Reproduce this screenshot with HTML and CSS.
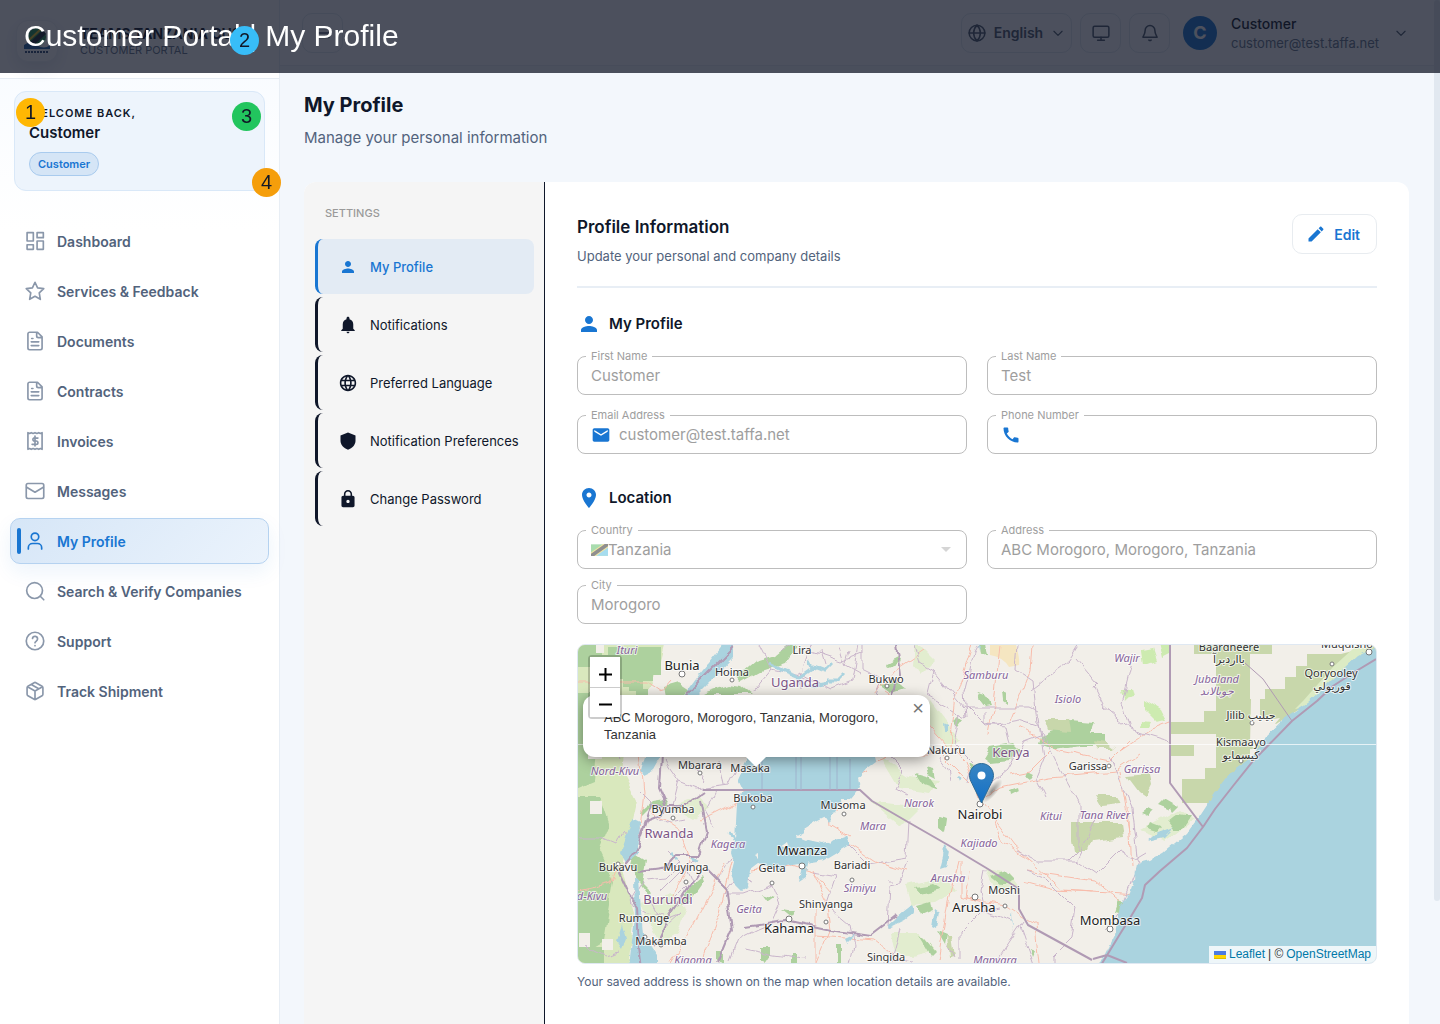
FILE: index.html
```html
<!DOCTYPE html>
<html lang="en">
<head>
<meta charset="utf-8">
<meta name="viewport" content="width=device-width, initial-scale=1">
<title>Customer Portal | My Profile</title>
<link rel="stylesheet" href="styles.css">
</head>
<body>
<svg class="sprite" aria-hidden="true">
  <symbol id="person" viewBox="0 0 24 24"><path d="M12 12c2.21 0 4-1.79 4-4s-1.79-4-4-4-4 1.79-4 4 1.79 4 4 4zm0 2c-2.67 0-8 1.34-8 4v2h16v-2c0-2.66-5.33-4-8-4z"/></symbol>
  <symbol id="doc" viewBox="0 0 24 24"><path d="M15 1.500H5.500a2 2 0 0 0-2 2v17a2 2 0 0 0 2 2h13a2 2 0 0 0 2-2V7zM14 2v4a2 2 0 0 0 2 2h4M9.500 9H8M16.500 13H7.500M16.500 17.500H7.500"/></symbol>
  <symbol id="chevron" viewBox="0 0 24 24"><path d="m5 9 7 7 7-7"/></symbol>
</svg>

<div class="shell">
  <aside class="sidebar">
    <div class="brand">
      <div class="logo">
        <svg viewBox="0 0 28 28" width="28" height="28"><circle cx="14" cy="10" r="9" fill="#1f8a4c"/><path d="M6 16 20 3l3 4L10 19z" fill="#1b2433"/><path d="M5 14 18 2" stroke="#e8c020" stroke-width="2"/><path d="M1 18q6-5 13 0t13 0v4H1z" fill="#1f5fa8"/><path d="M2 25h24" stroke="#2c4a74" stroke-width="2" stroke-dasharray="2 1"/></svg>
      </div>
      <div class="brand-text"><strong>TEAMS TANZANIA CUS</strong><span>CUSTOMER PORTAL</span></div>
    </div>
    <section class="welcome">
      <p class="welcome-hi">WELCOME BACK,</p>
      <p class="welcome-name">Customer</p>
      <span class="chip">Customer</span>
    </section>
    <nav class="nav" aria-label="Main">
      <a href="#"><svg class="line" viewBox="0 0 24 24"><path d="M2.500 2h7.500v10H2.500zM14.500 2h7.500v6h-7.500zM14.500 12h7.500v10h-7.500zM2.500 16.500h7.500V22H2.500z"/></svg>Dashboard</a>
      <a href="#"><svg class="line" viewBox="0 0 24 24"><path d="m12 1.500 3.100 6.700 7.400 1-5.400 5.100 1.300 7.700-6.400-3.700-6.400 3.700 1.300-7.700-5.400-5.100 7.400-1z"/></svg>Services &amp; Feedback</a>
      <a href="#"><svg class="line"><use href="#doc"/></svg>Documents</a>
      <a href="#"><svg class="line"><use href="#doc"/></svg>Contracts</a>
      <a href="#"><svg class="line" viewBox="0 0 24 24"><path d="M3.500 2v20l2-1 2 1 2.200-1 2.300 1 2.300-1 2.200 1 2-1 2 1V2l-2 1-2-1-2.200 1L12 2 9.700 3 7.500 2l-2 1zM15.500 8.500h-5a2 2 0 0 0 0 3.500h3a2 2 0 0 1 0 4h-5M12 6v12"/></svg>Invoices</a>
      <a href="#"><svg class="line" viewBox="0 0 24 24"><rect x="1.500" y="3" width="21" height="18" rx="2"/><path d="m2 7.500 10 6 10-6"/></svg>Messages</a>
      <a href="#" class="active" aria-current="page"><svg class="line" viewBox="0 0 24 24"><circle cx="12" cy="7" r="4.500"/><path d="M4 21.500v-1.500a5 5 0 0 1 5-5h6a5 5 0 0 1 5 5v1.500"/></svg>My Profile</a>
      <a href="#"><svg class="line" viewBox="0 0 24 24"><circle cx="11.500" cy="11.500" r="9.500"/><path d="m22.500 22.500-4.200-4.200"/></svg>Search &amp; Verify Companies</a>
      <a href="#"><svg class="line" viewBox="0 0 24 24"><circle cx="12" cy="12" r="10.500"/><path d="M9 9a3 3 0 0 1 6 1c0 2-3 2.600-3 4M12 17.500v.1"/></svg>Support</a>
      <a href="#"><svg class="line" viewBox="0 0 24 24"><path d="m7.500 4.300 9 5.100M21.500 8a2 2 0 0 0-1-1.700l-7.500-4.300a2 2 0 0 0-2 0l-7.500 4.300A2 2 0 0 0 2.500 8v8a2 2 0 0 0 1 1.700L11 22a2 2 0 0 0 2 0l7.500-4.300a2 2 0 0 0 1-1.700zM3 7l9 5 9-5M12 22V12"/></svg>Track Shipment</a>
    </nav>
  </aside>

  <div class="page">
    <header class="topbar">
      <button class="tool tool-menu" aria-label="Menu"><svg class="line" viewBox="0 0 24 24"><path d="M4 6h16M4 12h16M4 18h16"/></svg></button>
      <div class="tools">
        <button class="tool tool-lang"><svg class="line" viewBox="0 0 24 24"><circle cx="12" cy="12" r="10.500"/><path d="M1.500 12h21M12 1.500c6 6 6 15 0 21c-6-6-6-15 0-21"/></svg>English<svg class="line small"><use href="#chevron"/></svg></button>
        <button class="tool" aria-label="Display"><svg class="line" viewBox="0 0 24 24"><rect x="1.500" y="3" width="21" height="14.500" rx="2"/><path d="M7.500 21.500h9M12 17.500v4"/></svg></button>
        <button class="tool" aria-label="Notifications"><svg class="line" viewBox="0 0 24 24"><path d="M12 2a6.500 6.500 0 0 0-6.500 6.500c0 5-2.500 7.500-3 9h19c-.5-1.500-3-4-3-9A6.500 6.500 0 0 0 12 2zM10.500 21.500q1.500 1 3 0"/></svg></button>
        <button class="account">
          <span class="avatar">C</span>
          <span class="account-text"><strong>Customer</strong><small>customer@test.taffa.net</small></span>
          <svg class="line small"><use href="#chevron"/></svg>
        </button>
      </div>
    </header>

    <main class="main">
      <h1>My Profile</h1>
      <p class="lead">Manage your personal information</p>

      <div class="card">
        <nav class="settings" aria-label="Settings">
          <h2>SETTINGS</h2>
          <a href="#" class="active"><svg><use href="#person"/></svg>My Profile</a>
          <a href="#"><svg viewBox="0 0 24 24"><path d="M12 23c1.100 0 2-.9 2-2h-4c0 1.100.89 2 2 2zm7-6v-6c0-3.370-1.940-6.140-5-6.820V3c0-1.100-.9-2-2-2s-2 .9-2 2v1.180C6.930 4.860 5 7.620 5 11v6l-2 2v1h18v-1l-2-2z"/></svg>Notifications</a>
          <a href="#"><svg viewBox="1 1 22 22"><path d="M11.990 2C6.470 2 2 6.480 2 12s4.470 10 9.990 10C17.520 22 22 17.520 22 12S17.520 2 11.990 2zm6.930 6h-2.950c-.32-1.250-.78-2.450-1.380-3.560 1.840.63 3.370 1.910 4.330 3.560zM12 4.040c.83 1.200 1.480 2.530 1.910 3.960h-3.820c.43-1.430 1.080-2.760 1.910-3.960zM4.260 14C4.100 13.360 4 12.690 4 12s.1-1.360.26-2h3.380c-.08.66-.14 1.320-.14 2s.06 1.340.14 2H4.260zm.82 2h2.950c.32 1.250.78 2.450 1.380 3.560-1.840-.63-3.370-1.900-4.330-3.560zm2.950-8H5.080c.96-1.660 2.490-2.930 4.330-3.560C8.810 5.550 8.350 6.750 8.030 8zM12 19.960c-.83-1.200-1.480-2.530-1.910-3.960h3.820c-.43 1.430-1.080 2.760-1.910 3.960zM14.340 14H9.660c-.09-.66-.16-1.320-.16-2s.07-1.350.16-2h4.680c.09.65.16 1.320.16 2s-.07 1.340-.16 2zm.25 5.560c.6-1.110 1.060-2.310 1.380-3.560h2.950c-.96 1.650-2.490 2.930-4.330 3.560zM16.360 14c.08-.66.14-1.320.14-2s-.06-1.340-.14-2h3.380c.16.64.26 1.310.26 2s-.1 1.360-.26 2h-3.380z"/></svg>Preferred Language</a>
          <a href="#"><svg viewBox="0 0 24 24"><path d="M12 .5 2 4.500v7c0 5.200 4.200 10 10 12 5.800-2 10-6.800 10-12v-7z"/></svg>Notification Preferences</a>
          <a href="#"><svg viewBox="1 1 22 22"><path d="M18 8h-1V6c0-2.760-2.240-5-5-5S7 3.240 7 6v2H6c-1.100 0-2 .9-2 2v10c0 1.100.9 2 2 2h12c1.100 0 2-.9 2-2V10c0-1.100-.9-2-2-2zm-6 9c-1.100 0-2-.9-2-2s.9-2 2-2 2 .9 2 2-.9 2-2 2zm3.100-9H8.900V6c0-1.710 1.390-3.100 3.100-3.100s3.100 1.390 3.100 3.100v2z"/></svg>Change Password</a>
        </nav>

        <form class="content">
          <div class="content-head">
            <div>
              <h2>Profile Information</h2>
              <p>Update your personal and company details</p>
            </div>
            <button type="button" class="edit"><svg viewBox="0 0 24 24"><path d="M3 17.250V21h3.750L17.810 9.940l-3.750-3.750L3 17.250zM20.710 7.040c.39-.39.39-1.020 0-1.410l-2.340-2.340c-.39-.39-1.020-.39-1.410 0l-1.830 1.830 3.750 3.750 1.830-1.830z"/></svg>Edit</button>
          </div>

          <h3><svg><use href="#person"/></svg>My Profile</h3>
          <div class="grid">
            <div class="field"><label for="first">First Name</label><input id="first" value="Customer" disabled></div>
            <div class="field"><label for="last">Last Name</label><input id="last" value="Test" disabled></div>
            <div class="field"><label for="email">Email Address</label><svg class="lead-icon" viewBox="0 0 24 24"><path d="M20 4H4c-1.100 0-1.990.9-1.990 2L2 18c0 1.100.9 2 2 2h16c1.100 0 2-.9 2-2V6c0-1.100-.9-2-2-2zm0 4-8 5-8-5V6l8 5 8-5v2z"/></svg><input id="email" type="email" value="customer@test.taffa.net" disabled></div>
            <div class="field"><label for="phone">Phone Number</label><svg class="lead-icon" viewBox="0 0 24 24"><path d="M20.010 15.380c-1.230 0-2.420-.2-3.530-.56-.35-.12-.74-.03-1.010.24l-1.570 1.970c-2.830-1.350-5.480-3.900-6.890-6.830l1.950-1.660c.27-.28.35-.67.24-1.020-.37-1.110-.56-2.300-.56-3.530 0-.54-.45-.99-.99-.99H4.190C3.650 3 3 3.240 3 3.990 3 13.280 10.730 21 20.010 21c.71 0 .99-.63.99-1.180v-3.450c0-.54-.45-.99-.99-.99z"/></svg><input id="phone" type="tel" disabled></div>
          </div>

          <h3 class="second"><svg viewBox="0 0 24 24"><path d="M12 2C8.130 2 5 5.130 5 9c0 5.250 7 13 7 13s7-7.750 7-13c0-3.870-3.130-7-7-7zm0 9.500c-1.380 0-2.500-1.120-2.500-2.500s1.120-2.500 2.500-2.500 2.500 1.120 2.500 2.500-1.120 2.500-2.500 2.500z"/></svg>Location</h3>
          <div class="grid tight">
            <div class="field field-country">
              <label for="country">Country</label>
              <svg class="flag" viewBox="0 0 18 12"><path fill="#a9dcae" d="M0 0h18v12H0z"/><path fill="#a6dcef" d="M18 0v12H0z"/><path d="M-1 13 19-1" stroke="#f5e6a0" stroke-width="6"/><path d="M-1 13 19-1" stroke="#8f8f8f" stroke-width="4"/></svg>
              <select id="country" disabled><option>Tanzania</option></select>
              <svg class="caret" viewBox="0 0 10 5"><path d="M0 0h10L5 5z"/></svg>
            </div>
            <div class="field"><label for="address">Address</label><input id="address" value="ABC Morogoro, Morogoro, Tanzania" disabled></div>
            <div class="field"><label for="city">City</label><input id="city" value="Morogoro" disabled></div>
          </div>

          <div class="map">
            <svg class="tiles" viewBox="578 644 798 318" preserveAspectRatio="xMidYMid slice" role="img" aria-label="Map of East Africa">
              <defs>
                <filter id="rough" x="-5%" y="-5%" width="110%" height="110%"><feTurbulence type="fractalNoise" baseFrequency=".06" numOctaves="2" seed="4"/><feDisplacementMap in="SourceGraphic" scale="9" xChannelSelector="R" yChannelSelector="G"/></filter>
                <filter id="shore" x="-5%" y="-5%" width="110%" height="110%"><feTurbulence type="fractalNoise" baseFrequency=".12" numOctaves="2" seed="9"/><feDisplacementMap in="SourceGraphic" scale="5" xChannelSelector="R" yChannelSelector="G"/></filter>
              </defs>
              <path fill="#f2efe9" d="M578 644h798v318H578z"/>
              <!-- vegetation -->
              <g filter="url(#rough)">
                <path fill="#d9e8bd" d="M570 640h95l-10 40-25 30-8 60 15 30-15 70 12 40-6 60h-66z"/>
                <path fill="#add19e" d="M570 690h22l8 30-6 60-24 10zM570 795h30l10 30-10 25 14 30-10 60-34 20zM634 852l12 8-4 22 10 10-3 4-10-14-8-18zM690 885l12-10 2 6-14 20-10 2zM640 812l14-12 12-2 4 6-20 4-8 8zM755 660l20-6 15-12 8 2-12 18-24 8-22 12-4-6zM705 692l24-8 12 2 10 8h-50z"/>
                <path fill="#e2edcf" d="M670 805l30-10 8 14-14 10zM640 900l30-5 16 12-8 26-20 12zM915 640l20 20-14 14-8-10zM930 700l30 40-14 4-20-24zM880 755l30 20 30 4-10 14-30-4zM870 800l50 6-20 20zM905 884l40-8 10 14-20 12-24 2zM890 932l30 0 16 18-24 6-18-6zM985 868l24 4 10 14-24 4zM1140 830l40-22 16 10-30 22z"/>
                <path fill="#add19e" d="M664 686l14-4 12 8-6 6h-18zM885 662l12-6 4 5-14 5zM880 684l16-4 8 6-14 5zM978 640h8l2 14-8 1zM980 692l6 2 4 10-6 1-6-8zM1002 690l5 2v10l-4-3zM925 765l8 2 2 10-8-4zM915 772l14 4 10 14-16-6zM958 714l6 4-6 8-4-6zM968 760l10 6 4 12-10-6zM940 815l6 2-2 14-4-3zM990 746l22-4 8 8-8 10-20 2-8-6zM1010 790l8-3 1 4-8 4zM1026 770l6 3-4 6-4-3zM762 893l12 4-6 4zM782 908l14 2-4 6zM760 947h12v10l-6 4-6-4zM792 952h6v12h-6zM836 963v-18h4v18zM716 960v-10h8v12zM915 886l18-3 8 5-20 5zM917 905l14-4 2 8-12 5zM920 935l6 4 10 12-4 4zM938 930l10 4-2 10zM990 876l16-6 8 8-14 6zM1118 898l6 2-2 12-8-2zM1030 948l6 2-3 7zM1040 735l18-6 10-9 26 2-4 10h14v12h-24l-24 4-18-6z"/>
                <path fill="#c8d7ab" d="M1072 822l50 0 2 14-32 4-4 10h-14l-2-12zM1046 718l22 0 2 14-20-2zM1095 795l22 0 4 8-20 2zM1127 775l22-2 2 10-6 12-6-4zM948 935l4 0 3 22-5 1zM1092 740l14 2 8 6-16 0z"/>
                <path fill="#cdebb0" d="M1143 650l10-2 4 12-12 4zM1158 640l12 2v12l-8 4zM1123 688l8 0 2 8-8 2zM1144 698l16 10 6 12-8 2-14-14zM1142 720l10 1-3 6h-8zM1122 690l8 3-4 6z"/>
                <path fill="#add19e" d="M1142 812l8-6 5 3-6 6zM1158 805l8-8 7 4-5 8zM1168 820l10-8 14 2-10 14-8 0zM1150 822l10 4-4 5-9-3zM1166 800l12 4-6 6z"/>
              </g>
              <path fill="#add19e" d="M578 644h24v10h6v-8h53v28h-8v6h-10v10h-14v-4h-6v-8h-12v-12h-33zM636 688h12v7h-12zM578 800h22v14h-10v10h-12zM578 918h12v12h-12zM578 946h26v16h-26z"/>
              <path fill="#f2efe9" d="M588 746h14v12h-14zM590 800h12v13h-12zM602 938h11v11h-11zM579 932h11v14h-11zM596 644h8v8h-8z"/>
              <path fill="#f5e6c1" d="M990 644h26q4 14 3 20l-10 2q-6-10-19-12z"/>
              <g fill="#c8d7ab">
                <path d="M1194 644h78v9h-22v135h-23v14h-45v-24h23v-11h11v-34h-46v-12h34v-11h12v-57h-22zM1171 744h23v11h-23zM1285 676h11v-11h11v-12h34l35-9v20l-60 34-40 25-23-13v-12h12v-10h20zM1250 698h10v50h-10z"/>
              </g>
              <path fill="#f2efe9" d="M1251 698h9v22l20-3-26 30-4-4z"/>
              <path fill="#dcebc4" d="M1355 646l-22 20-30 34-8 8 10-2 50-44 22-14z"/>
              <!-- roads -->
              <g class="roads" filter="url(#rough)">
                <path d="M578 681h70l14 10 8-10M578 890l34-8 8-20M600 720l40 30 4 40-4 40M700 962l20-50 14-60 16-30 20-10M725 862l-14 28-20 40-20 32M752 870l40-6 20 6 20 22M812 868l14 30 4 30-14 34M850 835l-20-12-2-22 14-20 24-10M845 840l30 20 34 10M815 902v60M815 935l60 4 30 24M938 960l10-60 10-40M970 870l-4 28 40 6 30 20 4 40M980 800l-14-40-16-16 6-50 16-50M980 800l20-14 50-10 66-6 24-16M983 804l30 40 50 44 90 6M1010 720l20-50 2-26M1120 750l30-20 20-8M1020 726l40 24 50 10 20-20M1128 805l4 60M1120 770l10 60M870 762l30-10 40 0 30 30M886 690l30 20 30 34M700 820l40-20 10-30M840 790l-4 20M960 860l0 36 20 6M1120 900l-24-20-70-10M1050 750l-20 20-20 4M1000 644l-6 60-6 30M870 700l24-30 30-20M650 810l30 20 10 30-20 40M1024 880l30 8 40 2M990 810l10 30 30 20"/>
              </g>
              <!-- districts -->
              <g class="districts" filter="url(#rough)">
                <path d="M760 644l12 24 30 6 10-30M772 668l-20 24M802 674l30 14 20-8 6-36M812 650l30 10 20-8M800 690v-20l20 12M862 644v24l20 10-6 18M840 644l6 20M915 644l5 18 14 8-6 24 38 22-2-24 10-40 4-8M934 670l30 36 66 0 8 4M966 706l20 20 34-6 18 6M1017 644l-2 24 18 12 4 42 20 40 22 40 0 46-12 12M1030 690l40-30 10-16M1078 658l20 24-4 4 10 20 26 22 40 12M1130 728l-8-26 10-40M984 710l0 14 20 2 4 16M960 712l-6 30 20 20-6 20M984 790l24-20 16-30 16-6M1038 716l6 40-8 20 10 20M1100 810l-24 50 20 14 24-24 20 10-20 50-14 20M1078 860l-40 0-20-10M1110 756l22 50 6 50M578 838h24l14 6 6-14 6 8M642 880l-12 20 14 10 20 4M668 850l12 12-14 14-18 2M700 852l-14 14 6 14-24 24M664 760l14 20-6 24M678 780l20 8 30-4 10-20M640 790l14 14 20 4M690 760l14 20M720 760l4 24M750 785l-8 30-10 40-14 24M752 880l-14-6-14 20 20 0 28-10 8 20-8 18-14 6-20 10-8 20M745 948l30 6 30 4M812 870l24 4-10 30 24 20 4 20-4 20M848 843l20 20 38-6 2-36M908 862l-8 20-10 2-2 44M900 928l-8 30 20 4M894 880l-6 0M960 960v-30l20-20 20-4M955 958l-8-14M1023 920l-24 36-10 8M1020 925l14 40M1026 870l20 8 30 30-4 30-20 20 0 10M985 870l-4 20 4 20 26 10M584 945l20 10 14-4M880 700l20 30-8 20M890 756l14 14-8 20 10 6M940 758l8 10 2 10M980 775l10-4M1137 858l10-6"/>
                <path d="M620 760l-10-26-20-10M715 790l-10 20 8 14M655 815l10 8 20-4M680 870l-20 20M650 900l10 20 20-8M660 930l20-18M820 650l4 14M780 650l10-6M850 650l-4 14 14 8"/>
              </g>
              <!-- inland water -->
              <g fill="#aad3df" filter="url(#shore)">
                <path d="M733 642h-8l-26 32-16 22h12l18-18 20-21z"/>
                <path d="M646 752h16l-10 18-8 4-3-5zM632 818l8 4-2 30-12 10-5-10zM634 876l5 1 2 34 2 22 14 20v14h-28l2-20 4-30zM622 924l4 14-4 10-5-8z"/>
                <path d="M758 735h112l6 25-8 6-10 12 2 8-10 12-8 0-8 13-16 8-14 9 0 10 18 4 16-4 8-3 3 9-25 15-38 6-4 4-14-4-10-2-8 6-2 16-7 4-6-6-4-10 3-12-3-10 4-12 2-36 6-14-5-10z"/>
                <path d="M887 925l16-14 9-7 2 7-10 8-16 8zM935 908l4 3-3 17-4-2zM944 843l5 8-3 15-6 2 3-12zM1012 912l1 16-2-12zM805 876l-6 4 4-20 6-2zM845 938l12-6-10 10zM1148 840l10-8 16-6-10 10zM944 722l4 2 0 8-3-2zM958 776l4 1-2 4zM978 644l2 0-1 6z"/>
                <path d="M824 815l10-4-6 10z"/>
              </g>
              <path class="kyoga" filter="url(#rough)" d="M780 668l20 8 14-10 10 4 8-8M800 676l6 10 22-4M814 668l-4-8M770 662l12 6M826 680l12 0 6-6M690 855l8 4M672 852l6 8M730 830l4 10"/>
              <g fill="#f2efe9" filter="url(#shore)"><path d="M796 836l10-6 6 6-6 4zM780 846l6-4 2 6zM754 854l4-2 0 6zM822 838l14-2-6 6z"/></g>
              <!-- ocean -->
              <path fill="#aad3df" filter="url(#shore)" d="M1384 642l-26 13-25 23-26 24-20 13-24 23-10 17-23 17-13 16-19 29-11 15-24 20-13 7-8 2-7 6-1 13-4 12-10 13-5 29-11 22-10 10h300z"/>
              <g class="borders">
                <path filter="url(#rough)" d="M733 646l-40 40-20 30-12 40-2 30 8 18-4 10-16 6-10 30-18 22 10 22 8 10 2 40 4 30 12 20M640 838l12-34 34 0 20-14M700 800l6 30-8 24-20 0-10 12-30 4M698 872l-30 44-14 30M896 644l4 30-8 20M706 868l20 20 6 40-14 34M745 925l40-6 46 10 40 6 26-20"/>
                <path d="M1376 658l-23 14-20 13-16 15-25 20-39 40-20 25-18 23-12 18-16 21-27 23-15 14-3 13-12 20-10 16-22 36M703 789h157l12 11 36 21 40 23 40 24 31 20v20l9 16 64 35M1093 958l14-4 20 8M1170 644v138l27 36 6 8"/>
                <path class="thin" d="M1245 662l18 16 29 42"/>
              </g>
              <g class="lakelines"><path d="M762 758v30M796 756v33M801 756v33M830 756v33M837 756v33M850 758v30"/></g>
              <path d="M578 743.500h798" stroke="#fff" stroke-opacity=".7"/>
              <g class="dots"><circle cx="682" cy="673" r="3"/><circle cx="732" cy="679" r="2"/><circle cx="887" cy="685" r="2"/><circle cx="947" cy="757" r="2"/><circle cx="1109" cy="765" r="2"/><circle cx="980" cy="803" r="3"/><circle cx="802" cy="865" r="3"/><circle cx="772" cy="882" r="2"/><circle cx="852" cy="879" r="2"/><circle cx="789" cy="918" r="3"/><circle cx="826" cy="921" r="2"/><circle cx="975" cy="896" r="3"/><circle cx="1005" cy="905" r="2"/><circle cx="1110" cy="928" r="3"/><circle cx="618" cy="863" r="2"/><circle cx="673" cy="817" r="2"/><circle cx="686" cy="881" r="2"/><circle cx="645" cy="936" r="2"/><circle cx="661" cy="944" r="2"/><circle cx="753" cy="806" r="2"/><circle cx="844" cy="813" r="2"/><circle cx="700" cy="772" r="2"/><circle cx="1332" cy="663" r="2"/><circle cx="1369" cy="651" r="3"/><circle cx="1252" cy="722" r="2"/><circle cx="1241" cy="760" r="2"/></g>
              <g class="region">
                <text x="627" y="653">Ituri</text><text x="615" y="774">Nord-Kivu</text><text x="592" y="899">d-Kivu</text><text x="728" y="847">Kagera</text><text x="749" y="912">Geita</text><text x="693" y="963">Kigoma</text><text x="873" y="829">Mara</text><text x="860" y="891">Simiyu</text><text x="986" y="678">Samburu</text><text x="1068" y="702">Isiolo</text><text x="1127" y="661">Wajir</text><text x="919" y="806">Narok</text><text x="979" y="846">Kajiado</text><text x="948" y="881">Arusha</text><text x="1051" y="819">Kitui</text><text x="1105" y="818">Tana River</text><text x="1142" y="772">Garissa</text><text x="995" y="963">Manyara</text><text x="1217" y="682">Jubaland</text><text x="1217" y="694">جوبالاند</text>
              </g>
              <g class="nation"><text x="795" y="686">Uganda</text><text x="1011" y="756">Kenya</text><text x="669" y="837">Rwanda</text><text x="668" y="903">Burundi</text></g>
              <g class="town">
                <text x="732" y="675">Hoima</text><text x="802" y="653">Lira</text><text x="886" y="682">Bukwo</text><text x="700" y="768">Mbarara</text><text x="750" y="771">Masaka</text><text x="753" y="801">Bukoba</text><text x="673" y="812">Byumba</text><text x="843" y="808">Musoma</text><text x="946" y="753">Nakuru</text><text x="1088" y="769">Garissa</text><text x="618" y="870">Bukavu</text><text x="686" y="870">Muyinga</text><text x="772" y="871">Geita</text><text x="852" y="868">Bariadi</text><text x="826" y="907">Shinyanga</text><text x="644" y="921">Rumonge</text><text x="661" y="944">Makamba</text><text x="886" y="960">Singida</text><text x="1004" y="893">Moshi</text><text x="1229" y="650">Baardheere</text><text x="1229" y="662">بااردبرآ</text><text x="1331" y="676">Qoryooley</text><text x="1332" y="689">قوريولي</text><text x="1251" y="718">Jilib جيليب</text><text x="1241" y="745">Kismaayo</text><text x="1241" y="758">كيسمايو</text><text x="1347" y="647">Muqdisho</text>
              </g>
              <g class="city"><text x="682" y="669">Bunia</text><text x="802" y="854">Mwanza</text><text x="789" y="932">Kahama</text><text x="980" y="818">Nairobi</text><text x="974" y="911">Arusha</text><text x="1110" y="924">Mombasa</text></g>
            </svg>
            <svg class="marker" viewBox="0 0 42 41"><defs><linearGradient id="pin" x1="0" y1="0" x2="0" y2="1"><stop offset="0" stop-color="#3a86c2"/><stop offset="1" stop-color="#126fc6"/></linearGradient><radialGradient id="shade"><stop offset="0" stop-color="#000" stop-opacity=".4"/><stop offset="1" stop-color="#000" stop-opacity="0"/></radialGradient></defs><ellipse cx="23" cy="28" rx="15" ry="5" transform="rotate(-50 23 28)" fill="url(#shade)"/><path d="M12.500.5C5.800.5.5 6 .5 12.500c0 3 1.200 5.500 2.500 8L12.500 40 22 20.500c1.300-2.500 2.500-5 2.500-8C24.500 6 19.200.5 12.500.5z" fill="url(#pin)" stroke="#2e6c97"/><circle cx="12.500" cy="12.500" r="4" fill="#fff"/></svg>
            <div class="popup"><p>ABC Morogoro, Morogoro, Tanzania, Morogoro, Tanzania</p><button type="button" aria-label="Close popup">×</button></div>
            <div class="zoom"><button type="button" aria-label="Zoom in"><svg viewBox="0 0 13 13"><path d="M0 6.500h13M6.500 0v13"/></svg></button><button type="button" aria-label="Zoom out"><svg viewBox="0 0 13 13"><path d="M0 6.500h13"/></svg></button></div>
            <div class="credit"><svg viewBox="0 0 12 8"><path fill="#4c7be1" d="M0 0h12v4H0z"/><path fill="#ffd500" d="M0 4h12v3H0z"/><path fill="#e0bc00" d="M0 7h12v1H0z"/></svg> <a href="#">Leaflet</a> | © <a href="#">OpenStreetMap</a></div>
          </div>
          <p class="caption">Your saved address is shown on the map when location details are available.</p>
        </form>
      </div>
    </main>
  </div>
</div>

<div class="scroll-thumb"></div>
<div class="banner">Customer Portal | My Profile</div>
<span class="pin pin-1">1</span>
<span class="pin pin-2">2</span>
<span class="pin pin-3">3</span>
<span class="pin pin-4">4</span>
</body>
</html>
```
FILE: styles.css
```css
* { box-sizing: border-box; }
body { margin: 0; background: #f3f7fc; color: #0f172a; font-family: Inter, "Liberation Sans", sans-serif; font-size: 14px; }
h1, h2, h3, p { margin: 0; }
a { color: inherit; text-decoration: none; }
button, input, select { font: inherit; color: inherit; }
button { cursor: pointer; }
svg { display: block; flex: none; fill: currentColor; }
.sprite { position: absolute; width: 0; height: 0; }
.line { width: 20px; height: 20px; fill: none; stroke: currentColor; stroke-width: 2; stroke-linecap: round; stroke-linejoin: round; }
.line.small { width: 16px; height: 16px; }

.shell { display: flex; height: 100vh; overflow: hidden; }

/* Sidebar */
.sidebar { width: 280px; flex: none; border-right: 1px solid #e8eef5; background: #fff linear-gradient(#f6faff, #fff 230px) no-repeat; }
.brand { display: flex; align-items: center; gap: 22px; height: 79px; padding: 4px 16px 0; border-bottom: 1px solid #e6ecf3; background: #fff; }
.logo { display: grid; place-items: center; width: 42px; height: 42px; flex: none; border-radius: 12px; background: #fff; box-shadow: 0 6px 16px rgba(30, 60, 120, .12); border: 1px solid #eef1f6; }
.brand-text { display: flex; flex-direction: column; white-space: nowrap; }
.brand-text strong { font-size: 14px; line-height: 18px; }
.brand-text span { font-size: 11px; line-height: 14px; color: #64748b; }
.welcome { margin: 12px 14px 0; padding: 13px 14px; height: 100px; border: 1px solid #d9e8f8; border-radius: 12px; background: #edf4fc; }
.welcome-hi { font-size: 11px; line-height: 16px; font-weight: 600; letter-spacing: 1px; }
.welcome-name { font-size: 15px; line-height: 24px; font-weight: 600; }
.chip { display: inline-block; margin-top: 7px; padding: 0 8px; border: 1px solid #a9cbee; border-radius: 12px; background: #d5e5f6; color: #1976d2; font-size: 11px; line-height: 22px; font-weight: 600; }
.nav { display: flex; flex-direction: column; gap: 4px; padding: 27px 10px 0; }
.nav a { position: relative; display: flex; align-items: center; gap: 12px; height: 46px; padding: 0 14px; border: 1px solid transparent; border-radius: 10px; color: #52637c; font-size: 14px; font-weight: 600; }
.nav svg { color: #8a97aa; }
.nav .active { border-color: #b5d2f0; background: linear-gradient(135deg, #d6e6f7, #ebf3fc); color: #1976d2; box-shadow: 0 8px 20px rgba(25, 118, 210, .08); }
.nav .active svg { color: #1976d2; }
.nav .active::before { content: ""; position: absolute; left: 6px; top: 9px; width: 4px; height: 26px; border-radius: 2px; background: #1976d2; }

/* Top bar */
.page { flex: 1; min-width: 0; display: flex; flex-direction: column; }
.topbar { display: flex; justify-content: space-between; align-items: center; height: 66px; flex: none; padding: 0 32px 0 22px; background: #f9fbfe; border-bottom: 1px solid #e5ebf3; }
.tools { display: flex; align-items: center; gap: 8px; }
.tool { display: flex; align-items: center; justify-content: center; gap: 8px; width: 41px; height: 40px; padding: 0; border: 1px solid #dfe6ee; border-radius: 10px; background: none; color: #475569; font-weight: 600; }
.tool .line { width: 18px; height: 18px; }
.tool .small { width: 14px; height: 14px; }
.tool-lang { width: 111px; }
.account { display: flex; align-items: center; gap: 14px; padding: 0 0 0 5px; border: 0; background: none; text-align: left; }
.account .avatar { display: grid; place-items: center; width: 34px; height: 34px; border-radius: 50%; background: #1976d2; color: #fff; font-size: 18px; font-weight: 700; }
.account .small { width: 14px; height: 14px; color: #475569; }
.account-text { display: flex; flex-direction: column; width: 149px; }
.account-text strong { font-size: 14px; line-height: 20px; font-weight: 500; }
.account-text small { font-size: 13px; line-height: 18px; color: #64748b; }

/* Page body */
.main { flex: 1; display: flex; flex-direction: column; padding: 25px 31px 0 24px; }
h1 { font-size: 20px; line-height: 28px; font-weight: 700; }
.lead { margin-top: 8px; font-size: 15px; line-height: 22px; color: #52637c; }
.card { flex: 1; display: flex; margin-top: 33px; border-radius: 12px 12px 0 0; background: #fff; overflow: hidden; }
.settings { width: 241px; flex: none; display: flex; flex-direction: column; gap: 3px; padding: 24px 10px 0 11px; border-right: 1px solid #0f172a; background: #f5f5f5; }
.settings h2 { margin: 0 10px 15px; font-size: 11px; line-height: 15px; font-weight: 500; color: #9a9a9a; }
.settings a { display: flex; align-items: center; gap: 13px; height: 55px; padding-left: 21px; border-left: 3px solid #0f172a; border-radius: 8px; font-size: 13px; white-space: nowrap; }
.settings svg { width: 18px; height: 18px; }
.settings .active { border-color: #1976d2; background: #e3ebf4; color: #1976d2; font-weight: 500; }

.content { flex: 1; min-width: 0; padding: 32px; }
.content-head { display: flex; justify-content: space-between; align-items: flex-start; height: 74px; border-bottom: 2px solid #e8eef5; }
.content-head h2 { font-size: 17px; line-height: 26px; font-weight: 600; }
.content-head p { margin-top: 6px; font-size: 13px; line-height: 20px; color: #52637c; }
.edit { display: flex; align-items: center; gap: 8px; height: 40px; padding: 0 16px 0 13px; border: 1px solid #e8ecf0; border-radius: 10px; background: #fff; color: #1976d2; font-size: 14px; font-weight: 600; }
.edit svg { width: 20px; height: 20px; }
h3 { display: flex; align-items: center; gap: 8px; margin: 24px 0 20px; font-size: 15px; line-height: 24px; font-weight: 600; }
h3 svg { width: 24px; height: 24px; color: #1976d2; }
h3.second { margin: 32px 0 20px; }
.grid { display: grid; grid-template-columns: 1fr 1fr; gap: 20px; }
.grid.tight { row-gap: 16px; }
.field { position: relative; display: flex; align-items: center; gap: 8px; height: 39px; padding: 0 13px; border: 1px solid #bdbdbd; border-radius: 8px; color: #9e9e9e; }
.field label { position: absolute; left: 8px; top: -8px; padding: 0 5px; background: #fff; font-size: 11px; line-height: 14px; }
.field input, .field select { flex: 1; min-width: 0; padding: 0; border: 0; background: none; color: #9e9e9e; font-size: 15px; line-height: 22px; opacity: 1; appearance: none; outline: none; }
.lead-icon { width: 20px; height: 20px; color: #1976d2; }
.field-country { gap: 0; }
.flag { width: 17px; height: 12px; }
.caret { width: 10px; height: 5px; margin-right: 2px; color: #d5d5d5; }

/* Map */
.map { position: relative; height: 320px; margin-top: 20px; border: 1px solid #dfe8f2; border-radius: 8px; overflow: hidden; }
.tiles { width: 100%; height: 100%; font-family: "Noto Sans", "DejaVu Sans", sans-serif; text-anchor: middle; }
.roads path { fill: none; stroke: #f8bcab; stroke-width: 1; }
.districts path { fill: none; stroke: #c9b5cb; stroke-width: 1; }
.borders path { fill: none; stroke: #b09ab4; stroke-width: 2; stroke-linejoin: round; }
.borders .thin { stroke-width: 1; }
.lakelines path { fill: none; stroke: #9fb4ce; stroke-width: 1; }
.kyoga { fill: none; stroke: #aad3df; stroke-width: 3; }
.dots circle { fill: #fff; stroke: #777; stroke-width: 1; }
.tiles text { paint-order: stroke; stroke: rgba(255, 255, 255, .7); stroke-width: 2px; stroke-linejoin: round; }
.region { font-size: 11px; font-style: italic; fill: #86639a; }
.nation { font-size: 13px; fill: #7d5587; }
.town { font-size: 11px; fill: #333; }
.city { font-size: 13px; fill: #222; }
.marker { position: absolute; left: calc(50% - 8px); top: 118px; width: 42px; height: 41px; }
.popup { position: absolute; left: 5px; top: 50px; width: 347px; padding: 14px 40px 14px 21px; border-radius: 12px; background: #fff; color: #333; font: 13px/17px "Liberation Sans", Arial, sans-serif; box-shadow: 0 3px 14px rgba(0, 0, 0, .4); }
.popup::after { content: ""; position: absolute; left: 163px; top: 100%; border: 10px solid transparent; border-top-color: #fff; border-bottom: 0; }
.popup button { position: absolute; right: 0; top: 0; width: 24px; height: 24px; padding: 0; border: 0; background: none; color: #757575; font: 20px/26px "Liberation Sans", Arial, sans-serif; }
.zoom { position: absolute; left: 10px; top: 10px; border: 2px solid rgba(0, 0, 0, .2); border-radius: 4px; background-clip: padding-box; }
.zoom button { display: grid; place-items: center; width: 30px; height: 30px; padding: 4px 0 0; border: 0; background: #fff; }
.zoom button + button { border-top: 1px solid #ccc; }
.zoom svg { width: 13px; height: 13px; fill: none; stroke: #000; stroke-width: 2; }
.credit { position: absolute; right: 0; bottom: 0; display: flex; align-items: center; gap: 3px; height: 17px; padding: 0 5px; background: rgba(255, 255, 255, .8); color: #333; font: 12px/17px "Liberation Sans", Arial, sans-serif; white-space: nowrap; }
.credit svg { width: 12px; height: 8px; }
.credit a { color: #0078a8; }
.caption { margin-top: 9px; font-size: 12px; line-height: 18px; color: #52637c; }

/* Layers over the page */
.scroll-thumb { position: fixed; right: 0; top: 0; width: 6px; height: 88vh; border-radius: 3px; background: #e1e8f0; }
.banner { position: fixed; left: 0; right: 0; top: 0; height: 73px; padding: 0 24px; background: rgba(17, 23, 39, .75); color: #fff; font: 30px/72px "Liberation Sans", Arial, sans-serif; }
.pin { position: fixed; width: 29px; height: 29px; border-radius: 50%; color: #111827; font: 20px/29px "Liberation Sans", Arial, sans-serif; text-align: center; }
.pin-1 { left: 16px; top: 98px; background: #ffb703; }
.pin-2 { left: 230px; top: 26px; background: #38bdf8; }
.pin-3 { left: 232px; top: 102px; background: #22c55e; }
.pin-4 { left: 252px; top: 168px; background: #f59e0b; }
```
